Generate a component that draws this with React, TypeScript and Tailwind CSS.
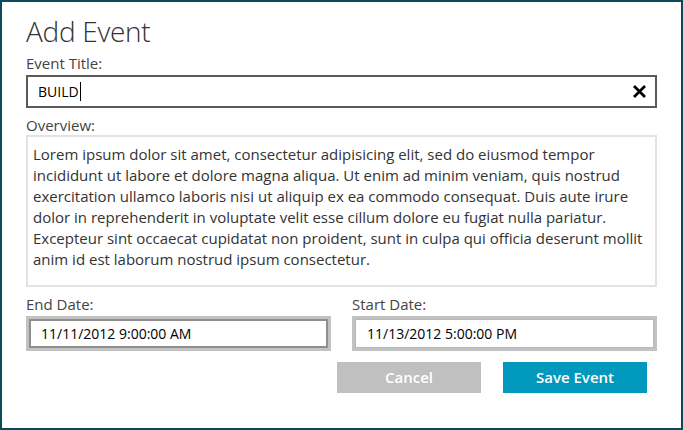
import React from "react";

const lines = [
  "Lorem ipsum dolor sit amet, consectetur adipisicing elit, sed do eiusmod tempor",
  "incididunt ut labore et dolore magna aliqua. Ut enim ad minim veniam, quis nostrud",
  "exercitation ullamco laboris nisi ut aliquip ex ea commodo consequat. Duis aute irure",
  "dolor in reprehenderit in voluptate velit esse cillum dolore eu fugiat nulla pariatur.",
  "Excepteur sint occaecat cupidatat non proident, sunt in culpa qui officia deserunt mollit",
  "anim id est laborum nostrud ipsum consectetur.",
];

export default function App() {
  return (
    <div
      className="w-[683px] h-[430px] bg-white border-2 border-[#0b4b59] box-border flex flex-col pl-[24px] pr-[24px] text-[#444]"
      style={{ fontFamily: '"Segoe UI", "Open Sans", "Noto Sans", sans-serif' }}
    >
      <div className="text-[28px] font-light leading-[34px] mt-[12px] text-[#333] tracking-[-0.3px]">Add Event</div>
      <div className="text-[15px] leading-[18px] mt-[6px] text-[#444]">Event Title:</div>
      <div className="mt-[3px] h-[33px] border-2 border-[#5a5a5a] flex items-center pl-[10px] pr-[8px]">
        <span className="text-[14px] text-black">BUILD</span>
        <span className="w-px h-[19px] bg-black ml-px" />
        <span className="flex-1" />
        <svg width="15" height="15" viewBox="0 0 15 15">
          <path d="M2 2 L13 13 M13 2 L2 13" stroke="#000" strokeWidth="2.8" strokeLinecap="butt" />
        </svg>
      </div>
      <div className="text-[15px] leading-[18px] mt-[8px]">Overview:</div>
      <div className="mt-[1px] h-[152px] border-2 border-[#e2e2e2] pl-[5px] pt-[7px] text-[#333]">
        {lines.map((l, i) => (
          <div key={i} className="text-[15px] leading-[21px] whitespace-nowrap">{l}</div>
        ))}
      </div>
      <div className="flex gap-[21px] mt-[8px]">
        <div className="flex flex-col w-[305px]">
          <div className="text-[15px] leading-[18px]">End Date:</div>
          <div className="mt-[3px] h-[35px] border-[3px] border-[#c2c2c2] shadow-[inset_0_0_0_2px_#8e8e8e] flex items-center pl-[12px]">
            <span className="text-[14px] text-black">11/11/2012 9:00:00 AM</span>
          </div>
        </div>
        <div className="flex flex-col w-[305px]">
          <div className="text-[15px] leading-[18px]">Start Date:</div>
          <div className="mt-[3px] h-[35px] border-[3px] border-[#c2c2c2] shadow-[inset_0_0_0_1px_#b8b8b8] flex items-center pl-[12px]">
            <span className="text-[14px] text-black">11/13/2012 5:00:00 PM</span>
          </div>
        </div>
      </div>
      <div className="flex justify-end gap-[22px] mt-[11px] pr-[10px]">
        <button className="w-[144px] h-[31px] bg-[#c0c0c0] text-white text-[15px] font-semibold">Cancel</button>
        <button className="w-[144px] h-[31px] bg-[#0099bd] text-white text-[15px] font-semibold">Save Event</button>
      </div>
    </div>
  );
}
